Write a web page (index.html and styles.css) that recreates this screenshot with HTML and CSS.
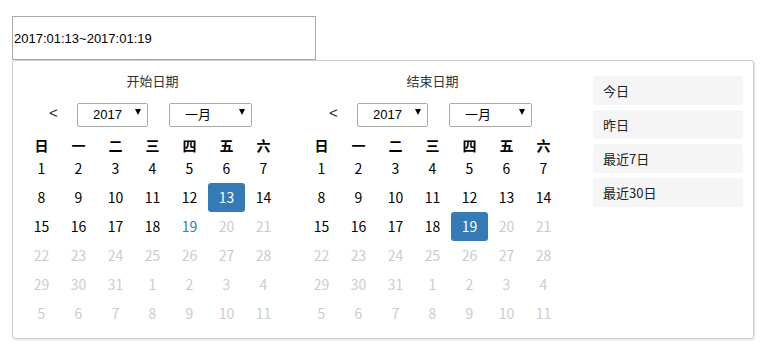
FILE: index.html
```html
<!DOCTYPE html>
<html lang="zh-CN">
<head>
    <meta charset="UTF-8">
    <meta name="viewport" content="width=device-width, initial-scale=1.0">
    <title>日期范围选择</title>
    <link rel="stylesheet" href="styles.css">
</head>
<body>
    <div class="page">
        <input type="text" class="range-input" value="2017:01:13~2017:01:19" readonly>

        <div class="picker">
            <!-- 开始日期 -->
            <div class="calendar">
                <div class="cal-title">开始日期</div>
                <div class="cal-controls">
                    <span class="prev">&lt;</span>
                    <span class="select-wrap year">
                        <select><option>2017</option></select>
                    </span>
                    <span class="select-wrap month">
                        <select><option>一月</option></select>
                    </span>
                </div>
                <div class="cal-grid">
                    <div class="wd">日</div><div class="wd">一</div><div class="wd">二</div><div class="wd">三</div><div class="wd">四</div><div class="wd">五</div><div class="wd">六</div>
                    <div class="day">1</div><div class="day">2</div><div class="day">3</div><div class="day">4</div><div class="day">5</div><div class="day">6</div><div class="day">7</div>
                    <div class="day">8</div><div class="day">9</div><div class="day">10</div><div class="day">11</div><div class="day">12</div><div class="day active">13</div><div class="day">14</div>
                    <div class="day">15</div><div class="day">16</div><div class="day">17</div><div class="day">18</div><div class="day end">19</div><div class="day off">20</div><div class="day off">21</div>
                    <div class="day off">22</div><div class="day off">23</div><div class="day off">24</div><div class="day off">25</div><div class="day off">26</div><div class="day off">27</div><div class="day off">28</div>
                    <div class="day off">29</div><div class="day off">30</div><div class="day off">31</div><div class="day off">1</div><div class="day off">2</div><div class="day off">3</div><div class="day off">4</div>
                    <div class="day off">5</div><div class="day off">6</div><div class="day off">7</div><div class="day off">8</div><div class="day off">9</div><div class="day off">10</div><div class="day off">11</div>
                </div>
            </div>

            <!-- 结束日期 -->
            <div class="calendar">
                <div class="cal-title">结束日期</div>
                <div class="cal-controls">
                    <span class="prev">&lt;</span>
                    <span class="select-wrap year">
                        <select><option>2017</option></select>
                    </span>
                    <span class="select-wrap month">
                        <select><option>一月</option></select>
                    </span>
                </div>
                <div class="cal-grid">
                    <div class="wd">日</div><div class="wd">一</div><div class="wd">二</div><div class="wd">三</div><div class="wd">四</div><div class="wd">五</div><div class="wd">六</div>
                    <div class="day">1</div><div class="day">2</div><div class="day">3</div><div class="day">4</div><div class="day">5</div><div class="day">6</div><div class="day">7</div>
                    <div class="day">8</div><div class="day">9</div><div class="day">10</div><div class="day">11</div><div class="day">12</div><div class="day">13</div><div class="day">14</div>
                    <div class="day">15</div><div class="day">16</div><div class="day">17</div><div class="day">18</div><div class="day active">19</div><div class="day off">20</div><div class="day off">21</div>
                    <div class="day off">22</div><div class="day off">23</div><div class="day off">24</div><div class="day off">25</div><div class="day off">26</div><div class="day off">27</div><div class="day off">28</div>
                    <div class="day off">29</div><div class="day off">30</div><div class="day off">31</div><div class="day off">1</div><div class="day off">2</div><div class="day off">3</div><div class="day off">4</div>
                    <div class="day off">5</div><div class="day off">6</div><div class="day off">7</div><div class="day off">8</div><div class="day off">9</div><div class="day off">10</div><div class="day off">11</div>
                </div>
            </div>

            <!-- 快捷选项 -->
            <ul class="shortcuts">
                <li>今日</li>
                <li>昨日</li>
                <li>最近7日</li>
                <li>最近30日</li>
            </ul>
        </div>
    </div>
</body>
</html>
```

FILE: styles.css
```css
body {
    margin: 0;
    padding: 0;
    background-color: #fff;
    font-family: "Noto Sans CJK SC", "Liberation Sans", sans-serif;
    color: #222;
}
.page {
    padding: 16px 12px;
}
.range-input {
    display: block;
    width: 304px;
    height: 44px;
    margin: 0;
    padding: 0 1px;
    border: 1px solid #a9a9a9;
    box-sizing: border-box;
    font-family: "Liberation Sans", "Noto Sans CJK SC", sans-serif;
    font-size: 13px;
    color: #000;
    outline: none;
}
.picker {
    display: flex;
    width: 742px;
    height: 279px;
    padding: 10px;
    box-sizing: border-box;
    border: 1px solid #ccc;
    border-radius: 3px;
    box-shadow: 1px 1px 2px rgba(0, 0, 0, 0.12);
}
.calendar {
    width: 259px;
    margin-right: 21px;
}
.calendar + .calendar {
    margin-right: 31px;
}
.cal-title {
    height: 20px;
    line-height: 20px;
    font-size: 13px;
    text-align: center;
    color: #333;
}
.cal-controls {
    display: flex;
    align-items: center;
    height: 24px;
    margin-top: 9px;
    padding-left: 26px;
}
.prev {
    width: 8px;
    margin-right: 20px;
    font-family: "Liberation Sans", sans-serif;
    font-size: 15px;
    color: #222;
}
.select-wrap {
    position: relative;
    display: block;
    height: 24px;
}
.select-wrap.year {
    width: 71px;
    margin-right: 21px;
}
.select-wrap.month {
    width: 83px;
}
.select-wrap select {
    width: 100%;
    height: 24px;
    margin: 0;
    padding: 0 0 0 15px;
    border: 1px solid #a9a9a9;
    border-radius: 2px;
    background: #fff;
    -webkit-appearance: none;
    appearance: none;
    font-family: "Liberation Sans", "Noto Sans CJK SC", sans-serif;
    font-size: 13px;
    color: #000;
    outline: none;
}
.select-wrap::after {
    content: "";
    position: absolute;
    right: 7px;
    top: 9px;
    border-left: 3px solid transparent;
    border-right: 3px solid transparent;
    border-top: 6px solid #000;
    pointer-events: none;
}
.cal-grid {
    display: grid;
    grid-template-columns: repeat(7, 37px);
    grid-template-rows: 18px;
    grid-auto-rows: 29px;
    margin-top: 12px;
}
.wd {
    line-height: 18px;
    text-align: center;
    font-size: 14px;
    font-weight: bold;
    color: #000;
}
.day {
    line-height: 29px;
    text-align: center;
    font-size: 14px;
    color: #000;
    border-radius: 3px;
}
.day.off {
    color: #ccc;
}
.day.end {
    color: #337ab7;
}
.day.active {
    background-color: #337ab7;
    color: #fff;
}
.shortcuts {
    list-style: none;
    width: 150px;
    margin: 5px 0 0;
    padding: 0;
}
.shortcuts li {
    height: 29px;
    line-height: 29px;
    margin-bottom: 5px;
    padding-left: 10px;
    font-size: 13px;
    color: #222;
    background-color: #f5f5f5;
    border-radius: 3px;
}
```
